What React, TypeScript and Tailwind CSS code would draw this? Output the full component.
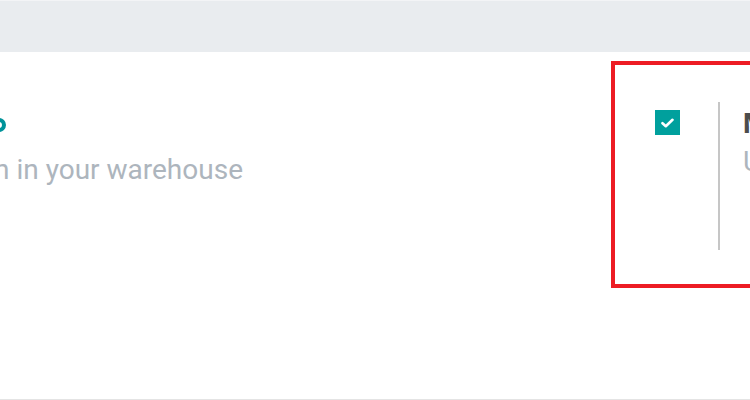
import React from 'react';

function CheckBox() {
  return (
    <div className="w-[25px] h-[25px] bg-[#00a09d] flex items-center justify-center shrink-0">
      <svg width="13" height="10" viewBox="0 0 13 10" fill="none">
        <path d="M1.5 5.2 L4.8 8.2 L11.5 1.8" stroke="white" strokeWidth="2.6" strokeLinecap="round" strokeLinejoin="round" />
      </svg>
    </div>
  );
}

function App() {
  return (
    <div
      className="w-[750px] h-[400px] overflow-hidden bg-white flex flex-col"
      style={{ fontFamily: 'Roboto, "Liberation Sans", sans-serif' }}
    >
      <div className="h-px bg-[#f3f4f6]" />
      <div className="h-[51px] bg-[#e9ecef] shrink-0" />

      <div className="flex-1 flex border-b border-[#e4e4e4] pt-[9px] overflow-hidden">
        {/* left setting, mostly scrolled out of view */}
        <div className="w-[611px] shrink-0 overflow-hidden">
          <div className="mt-[48px] w-[6px] flex justify-end">
            <div className="flex items-center shrink-0 whitespace-nowrap">
              <span className="text-[28px] leading-[32px] font-bold text-[#4c4c4c]">Storage Locations</span>
              <span className="ml-2 w-[14px] h-[14px] rounded-full border-[4px] border-[#00939a]" />
            </div>
          </div>
          <div className="mt-[13px] w-[243px] flex justify-end">
            <p className="shrink-0 whitespace-nowrap text-[28px] leading-[32px] text-[#adb5bd]">
              Track product location in your warehouse
            </p>
          </div>
        </div>

        {/* highlighted setting */}
        <div className="w-[320px] h-[227px] shrink-0 border-4 border-[#ed1c24] pl-[40px] pt-[37px] flex">
          <div className="pt-[8px]">
            <CheckBox />
          </div>
          <div className="ml-[38px] h-[148px] border-l-2 border-[#c6c6c6] pl-[23px] pt-[6px] whitespace-nowrap">
            <div className="text-[28px] leading-[32px] font-bold text-[#4c4c4c]">Multi-Step Routes</div>
            <div className="mt-[6px] text-[28px] leading-[32px] text-[#adb5bd]">Use your own routes</div>
          </div>
        </div>
      </div>
    </div>
  );
}

export default App;
